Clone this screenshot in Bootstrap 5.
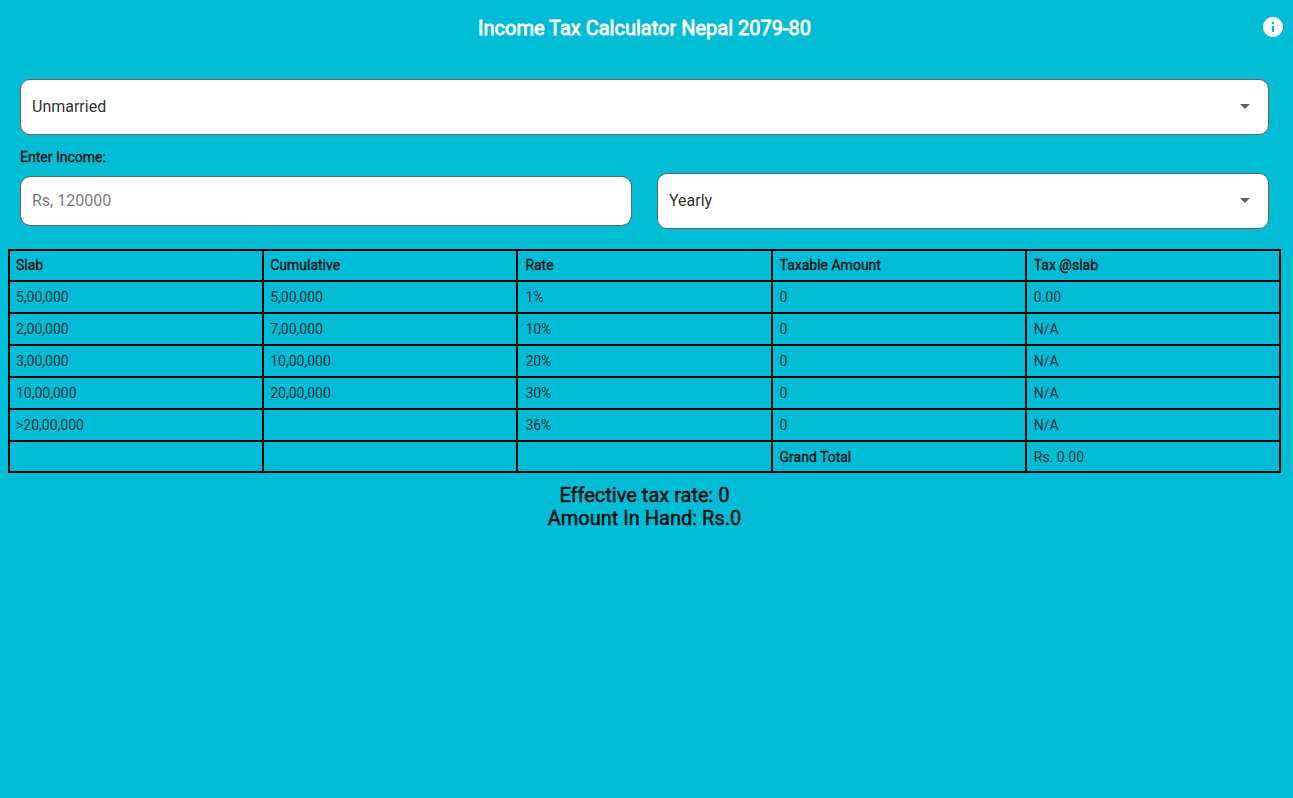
<!DOCTYPE html>
<html lang="en">
<head>
<meta charset="utf-8">
<meta name="viewport" content="width=device-width, initial-scale=1">
<title>Income Tax Calculator Nepal 2079-80</title>
<link href="https://cdn.jsdelivr.net/npm/bootstrap@5.3.0/dist/css/bootstrap.min.css" rel="stylesheet">
<style>
  body { background: #00bcd4; color: rgba(0,0,0,.87); font-family: Roboto, sans-serif; font-size: 14px; line-height: 16px; }
  .app-bar { height: 54px; padding: 0 8px 0 28px; color: #fff; }
  .app-title { font-size: 20px; line-height: 24px; padding-top: 2px; }
  .app-title, .income-label, .slab-table th, .totals { font-weight: 400; -webkit-text-stroke: .03em currentColor; }
  .app-bar .app-title { -webkit-text-stroke-width: .04em; }
  .info-btn { width: 24px; height: 24px; }
  .tax-page { padding: 0 12px 0 8px; }
  .tax-form { padding: 25px 12px 20px; }
  .tax-field, .tax-field:focus { background-color: #fff; border: 1px solid #666; border-radius: 10px; color: rgba(0,0,0,.84); font-size: 16px; line-height: 24px; padding: 0 11px; }
  select.tax-field { height: 56px; padding-right: 40px; background-image: url("data:image/svg+xml,%3Csvg xmlns='http://www.w3.org/2000/svg' viewBox='0 0 24 24'%3E%3Cpath d='M7 10l5 5 5-5z' fill='%23616161'/%3E%3C/svg%3E"); background-size: 24px; background-position: right 11px top 14px; }
  input.tax-field { height: 50px; padding-bottom: 2px; }
  .tax-field::placeholder { color: rgba(0,0,0,.56); }
  .income-label { margin: 14px 0 8px; }
  .income-row { gap: 25px; }
  .slab-table { table-layout: fixed; border-collapse: collapse; color: inherit; }
  .slab-table th, .slab-table td { border: 2px solid #000; height: 32px; padding: 0 7px; }
  .slab-table td { color: rgba(0,0,0,.78); }
  .slab-table tr > :first-child, .slab-table tr > :nth-child(2) { padding-left: 6px; }
  .slab-table thead th, .slab-table tfoot th, .slab-table tfoot td { height: 31px; }
  .slab-table thead th { padding-bottom: 1px; }
  .totals { font-size: 20px; line-height: 23px; padding-top: 11px; }
</style>
</head>
<body>
<header class="app-bar d-flex align-items-center">
  <h1 class="app-title flex-grow-1 text-center m-0">Income Tax Calculator Nepal 2079-80</h1>
  <button type="button" class="info-btn btn p-0 border-0 text-white d-flex" aria-label="About">
    <svg width="24" height="24" viewBox="0 0 24 24" fill="currentColor" aria-hidden="true"><path d="M12 2C6.480 2 2 6.480 2 12s4.480 10 10 10 10-4.480 10-10S17.520 2 12 2zm1 15h-2v-6h2v6zm0-8h-2V7h2v2z"/></svg>
  </button>
</header>
<main class="tax-page">
  <form class="tax-form">
    <select class="tax-field form-select" aria-label="Marital status"><option>Unmarried</option><option>Married</option></select>
    <label class="income-label d-block" for="income">Enter Income:</label>
    <div class="income-row d-flex align-items-center">
      <div class="col"><input class="tax-field form-control" id="income" type="text" inputmode="numeric" placeholder="Rs, 120000"></div>
      <div class="col"><select class="tax-field form-select" aria-label="Income period"><option>Yearly</option><option>Monthly</option></select></div>
    </div>
  </form>
  <table class="slab-table w-100">
    <thead><tr><th scope="col">Slab</th><th scope="col">Cumulative</th><th scope="col">Rate</th><th scope="col">Taxable Amount</th><th scope="col">Tax @slab</th></tr></thead>
    <tbody>
      <tr><td>5,00,000</td><td>5,00,000</td><td>1%</td><td>0</td><td>0.00</td></tr>
      <tr><td>2,00,000</td><td>7,00,000</td><td>10%</td><td>0</td><td>N/A</td></tr>
      <tr><td>3,00,000</td><td>10,00,000</td><td>20%</td><td>0</td><td>N/A</td></tr>
      <tr><td>10,00,000</td><td>20,00,000</td><td>30%</td><td>0</td><td>N/A</td></tr>
      <tr><td>&gt;20,00,000</td><td></td><td>36%</td><td>0</td><td>N/A</td></tr>
    </tbody>
    <tfoot><tr><td></td><td></td><td></td><th scope="row">Grand Total</th><td>Rs. 0.00</td></tr></tfoot>
  </table>
  <div class="totals text-center">
    <div>Effective tax rate: 0</div>
    <div>Amount In Hand: Rs.0</div>
  </div>
</main>
<script src="https://cdn.jsdelivr.net/npm/bootstrap@5.3.0/dist/js/bootstrap.bundle.min.js"></script>
</body>
</html>
